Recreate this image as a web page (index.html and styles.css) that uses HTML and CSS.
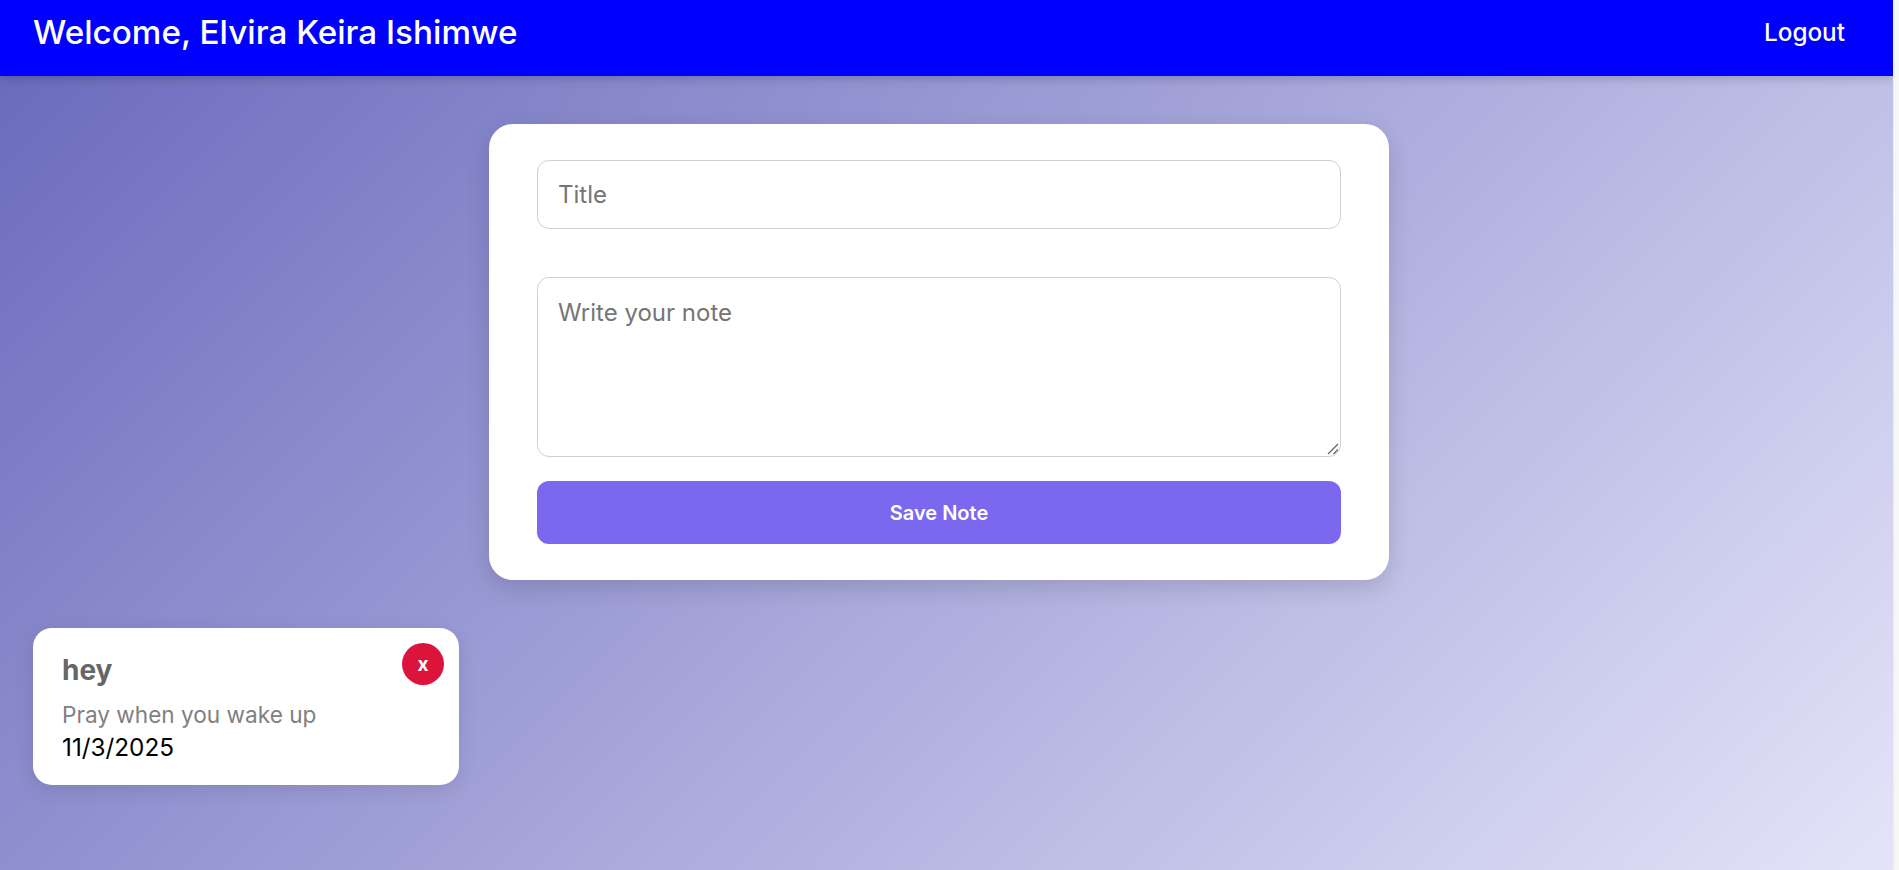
FILE: index.html
```html
<!DOCTYPE html>
<html lang="en">
<head>
<meta charset="utf-8">
<title>Notes</title>
<link rel="stylesheet" href="styles.css">
</head>
<body>
<div class="app">
  <header class="navbar">
    <h1 class="welcome">Welcome, Elvira Keira Ishimwe</h1>
    <a class="logout" href="#">Logout</a>
  </header>
  <main class="content">
    <form class="note-form">
      <input class="field field-title" type="text" placeholder="Title">
      <div class="note-wrap">
        <textarea class="field field-note" placeholder="Write your note"></textarea>
        <svg class="grip" width="12" height="12" viewBox="0 0 12 12" aria-hidden="true">
          <path d="M1 11 L11 1 M6.5 11 L11 6.5" stroke="#666" stroke-width="1.4" fill="none"/>
        </svg>
      </div>
      <button class="save" type="button">Save Note</button>
    </form>
    <section class="notes">
      <article class="note">
        <button class="delete" type="button">x</button>
        <h3 class="note-title">hey</h3>
        <p class="note-body">Pray when you wake up</p>
        <p class="note-date">11/3/2025</p>
      </article>
    </section>
  </main>
</div>
<div class="rail"></div>
</body>
</html>
```

FILE: styles.css
```css
* { box-sizing: border-box; }
html, body { margin: 0; height: 100%; }
body {
  display: flex;
  height: 870px;
  overflow: hidden;
  font-family: Inter, "Liberation Sans", sans-serif;
  background: #f5f5f5;
}
.app {
  flex: 1;
  min-width: 0;
  display: flex;
  flex-direction: column;
  background: linear-gradient(135deg, #6868bc 0%, #e6e6fa 102%);
}
.rail { width: 6px; background: #f6f6f6; border-left: 1px solid #ececec; }
.navbar {
  height: 76px;
  flex: none;
  display: flex;
  justify-content: space-between;
  align-items: flex-start;
  padding: 12px 48px 0 33px;
  background: #0000ff;
  color: #fff;
  box-shadow: 0 2px 10px rgba(0, 0, 0, 0.2);
}
.welcome { margin: 0; font-size: 33.25px; font-weight: 500; line-height: 40px; }
.logout { color: #fff; font-size: 24.3px; font-weight: 500; line-height: 40px; text-decoration: none; }
.content { flex: 1; padding: 48px 48px 0 33px; }
.note-form {
  width: 900px;
  height: 456px;
  margin: 0 auto;
  padding: 36px 48px;
  display: flex;
  flex-direction: column;
  background: #fff;
  border-radius: 24px;
  box-shadow: 0 8px 24px rgba(0, 0, 0, 0.14);
}
.field {
  display: block;
  width: 100%;
  padding: 0 20px;
  border: 1px solid #d0d0d0;
  border-radius: 12px;
  font-family: inherit;
  font-size: 24px;
  color: #333;
  background: #fff;
}
.field::placeholder { color: #757575; opacity: 1; }
.field-title { height: 69px; flex: none; margin-bottom: 48px; }
.note-wrap { position: relative; margin-bottom: 24px; }
.field-note { height: 180px; padding-top: 20px; line-height: 29px; resize: none; }
.grip { position: absolute; right: 2px; bottom: 2px; }
.save {
  height: 63px;
  border: 0;
  border-radius: 12px;
  background: #7b68ee;
  color: #fff;
  font-family: inherit;
  font-size: 20px;
  font-weight: 600;
}
.notes { margin-top: 48px; display: flex; gap: 24px; }
.note {
  position: relative;
  width: 426px;
  height: 157px;
  padding: 26px 29px;
  background: #fff;
  border-radius: 19px;
  box-shadow: 0 5px 19px rgba(0, 0, 0, 0.1);
}
.delete {
  position: absolute;
  top: 15px;
  right: 15px;
  width: 42px;
  height: 42px;
  padding: 0;
  border: 0;
  border-radius: 50%;
  background: #dc143c;
  color: #fff;
  font-family: inherit;
  font-size: 19px;
  font-weight: 700;
}
.note-title { margin: 0 0 13px; font-size: 28px; font-weight: 700; line-height: 32px; color: #666; }
.note-body { margin: 0; font-size: 22.6px; line-height: 32px; color: #808080; }
.note-date { margin: 0; font-size: 24.3px; line-height: 32px; color: #000; }
```
